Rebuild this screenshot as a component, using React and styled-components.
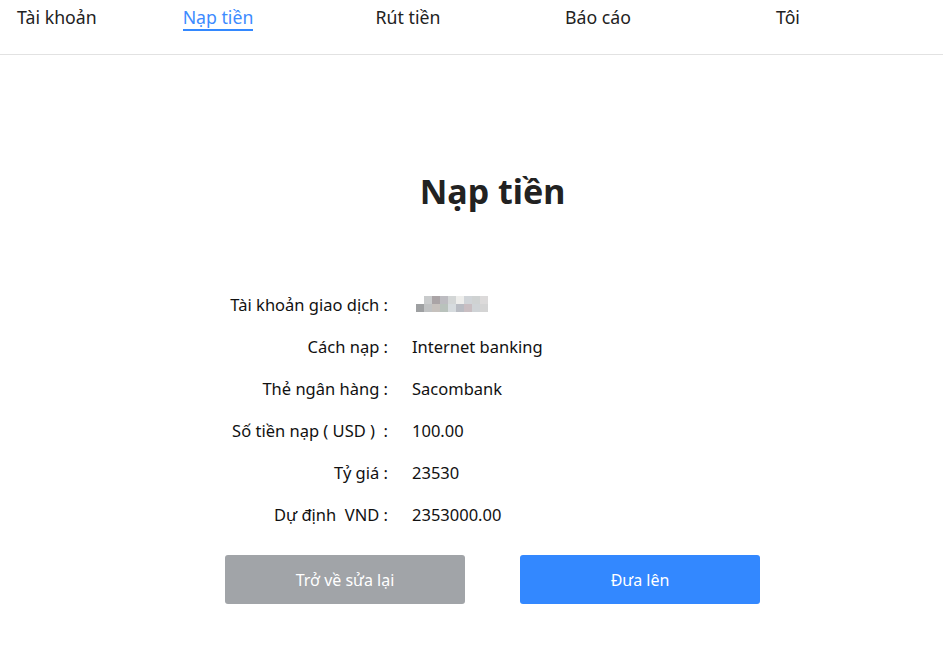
import React from 'react';
import styled, { createGlobalStyle } from 'styled-components';

const GlobalStyle = createGlobalStyle`
	* { box-sizing: border-box; }
	body {
		margin: 0;
		background: #fff;
		font-family: "Noto Sans", "Open Sans", sans-serif;
		color: #222;
	}
`;

const Nav = styled.nav`
	display: flex;
	align-items: flex-start;
	height: 55px;
	padding-left: 17px;
	border-bottom: 1px solid #e2e2e2;
`;

const NavCell = styled.div`
	width: ${(p) => (p.$lead ? '106px' : '190px')};
	display: flex;
	justify-content: ${(p) => (p.$lead ? 'flex-start' : 'center')};
`;

const NavItem = styled.span`
	font-size: 17.7px;
	line-height: 22px;
	padding-top: 6px;
	padding-bottom: 1px;
	color: ${(p) => (p.$active ? '#3d8bff' : '#222')};
	border-bottom: 2px solid ${(p) => (p.$active ? '#3388ff' : 'transparent')};
	cursor: pointer;
`;

const Page = styled.main`
	display: flex;
	flex-direction: column;
	align-items: center;
	padding-left: 42px;
`;

const Title = styled.h1`
	margin: 112px 0 0;
	font-size: 34px;
	line-height: 48px;
	font-weight: 700;
	color: #222;
`;

const Form = styled.div`
	width: 535px;
	margin-top: 68px;
	display: flex;
	flex-direction: column;
`;

const Row = styled.div`
	display: grid;
	grid-template-columns: 163px 1fr;
	column-gap: 24px;
	height: 42px;
	align-items: center;
	font-size: 16.5px;
	color: #111;
`;

const Label = styled.span`
	text-align: right;
	white-space: pre;
`;

const Value = styled.span``;

const Mosaic = styled.div`
	display: grid;
	grid-template-columns: repeat(10, 8px);
	grid-template-rows: repeat(2, 8px);
	margin-left: -4px;
	width: 80px;
	filter: blur(0.4px);
`;

const Buttons = styled.div`
	display: flex;
	justify-content: space-between;
	margin-top: 20px;
`;

const Button = styled.button`
	width: 240px;
	height: 49px;
	border: none;
	border-radius: 3px;
	font-family: inherit;
	font-size: 16px;
	color: #fff;
	background: ${(p) => (p.$primary ? '#3388ff' : '#a1a4a8')};
	cursor: pointer;
`;

const mosaic = [
	'#ffffff', '#ffffff', '#c9cbcc', '#aaa4a6', '#bdbcc1', '#d3d6d6', '#eeeeec', '#d0d4d8', '#cfd2d2', '#dcdada',
	'#ffffff', '#9ea0a2', '#c0c2c3', '#c6c1bd', '#b9c2bc', '#d6dbde', '#b9bcc3', '#c9bec2', '#cfd3d6', '#d4d4d4',
];

const rows = [
	['Cách nạp :', 'Internet banking'],
	['Thẻ ngân hàng :', 'Sacombank'],
	['Số tiền nạp ( USD )  :', '100.00'],
	['Tỷ giá :', '23530'],
	['Dự định  VND :', '2353000.00'],
];

const App = () => (
	<>
		<GlobalStyle />
		<Nav>
			<NavCell $lead>
				<NavItem>Tài khoản</NavItem>
			</NavCell>
			<NavCell>
				<NavItem $active>Nạp tiền</NavItem>
			</NavCell>
			<NavCell>
				<NavItem>Rút tiền</NavItem>
			</NavCell>
			<NavCell>
				<NavItem>Báo cáo</NavItem>
			</NavCell>
			<NavCell>
				<NavItem>Tôi</NavItem>
			</NavCell>
		</Nav>
		<Page>
			<Title>Nạp tiền</Title>
			<Form>
				<Row>
					<Label>Tài khoản giao dịch :</Label>
					<Mosaic>
						{mosaic.map((c, i) => (
							<span key={i} style={{ background: c }} />
						))}
					</Mosaic>
				</Row>
				{rows.map(([label, value]) => (
					<Row key={label}>
						<Label>{label}</Label>
						<Value>{value}</Value>
					</Row>
				))}
				<Buttons>
					<Button>Trở về sửa lại</Button>
					<Button $primary>Đưa lên</Button>
				</Buttons>
			</Form>
		</Page>
	</>
);

export default App;
